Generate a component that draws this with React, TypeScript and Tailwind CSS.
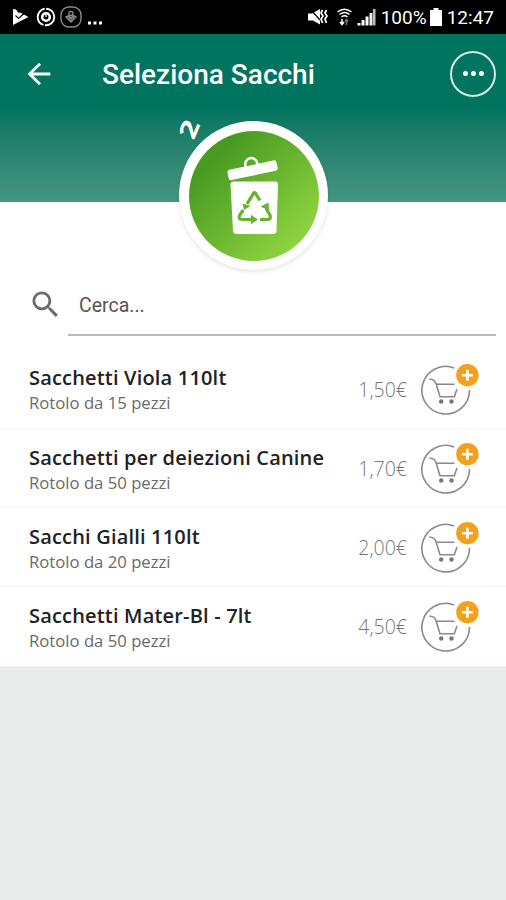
import { MdArrowBack, MdSearch } from 'react-icons/md'

interface Product {
  name: string
  details: string
  price: string
}

const products: Product[] = [
  { name: 'Sacchetti Viola 110lt', details: 'Rotolo da 15 pezzi', price: '1,50€' },
  { name: 'Sacchetti per deiezioni Canine', details: 'Rotolo da 50 pezzi', price: '1,70€' },
  { name: 'Sacchi Gialli 110lt', details: 'Rotolo da 20 pezzi', price: '2,00€' },
  { name: 'Sacchetti Mater-Bl - 7lt', details: 'Rotolo da 50 pezzi', price: '4,50€' }
]

function StatusBar() {
  return (
    <div className="flex h-[34px] items-center justify-between bg-black pl-3 pr-[12px] text-white">
      <div className="flex items-center">
        <svg className="h-[18px] w-[17px]" viewBox="0 0 17 18">
          <path d="M1 1 L4 1.5 L6.5 5 L8 4.5 L16.500 9 L1 17 Z" fill="white" />
          <path d="M3.500 7.500 L6.500 10.500 L12.500 5" fill="none" stroke="black" strokeWidth="1.2" />
        </svg>
        <svg className="ml-[7px] h-[20px] w-[20px]" viewBox="0 0 20 20" fill="none" stroke="white">
          <circle cx="10" cy="10" r="8.300" strokeWidth="1.900" strokeDasharray="14 1.5 22 1.5" />
          <circle cx="10" cy="10" r="3.800" strokeWidth="2.6" />
          <path d="M10 5 V10" stroke="white" strokeWidth="1.200" />
        </svg>
        <svg className="ml-[4px] h-[22px] w-[22px]" viewBox="0 0 22 22" fill="none" stroke="#8b8b8b">
          <rect x="1" y="1" width="20" height="20" rx="8" strokeWidth="1.4" />
          <circle cx="11" cy="7.5" r="2" strokeWidth="1.3" />
          <path d="M6 11 L11 16 L16 11 L13.5 9.5 L11 12 L8.5 9.5 Z" fill="#666" strokeWidth="1.3" />
        </svg>
        <svg className="ml-[5px] h-[20px] w-[16px]" viewBox="0 0 16 20" fill="white">
          <rect x="1" y="14.500" width="3" height="3" />
          <rect x="6.500" y="14.500" width="3" height="3" />
          <rect x="12" y="14.500" width="3" height="3" />
        </svg>
      </div>
      <div className="flex items-center">
        <svg className="h-[18px] w-[20px]" viewBox="0 0 20 18" fill="white">
          <path d="M0 5.500 H4 L12 1 V16.500 L5 12.500 H0 Z" />
          <path d="M2 1 L14 14" stroke="black" strokeWidth="1.2" />
          <path d="M14.500 2 L13 5 L15 8 L13 11 L14.500 15 M18.500 2 L17 5 L19 8 L17 11 L18.500 15" fill="none" stroke="white" strokeWidth="1.7" />
        </svg>
        <svg className="ml-[9px] h-[18px] w-[15px]" viewBox="0 0 15 18" fill="none" stroke="white" strokeWidth="1.5">
          <path d="M0.500 4 Q7.500 -1.500 14.500 4 M2.500 6.500 Q7.500 2.500 12.500 6.500 M4.500 9 Q7.500 6.500 10.500 9" />
          <path d="M5 11 V16 M3 14 L5 16.500 L7 14" />
          <path d="M9.500 17 V12 M8 13.500 L9.500 11.500 L11 13.500" stroke="#777" />
        </svg>
        <svg className="ml-[5px] h-[18px] w-[20px]" viewBox="0 0 20 18" fill="white">
          <rect x="0.500" y="15" width="3" height="2.500" />
          <rect x="4.500" y="12" width="3" height="5.500" />
          <rect x="8.500" y="8.500" width="3" height="9" />
          <rect x="12.500" y="5" width="3" height="12.500" fill="#eee" />
          <rect x="16" y="1" width="2.500" height="16.500" fill="#bbb" />
        </svg>
        <span className="ml-[4px] w-[45px] pt-[2px] text-[19px] leading-[32px]">100%</span>
        <svg className="ml-[4px] h-[18px] w-[12px]" viewBox="0 0 12 18" fill="white">
          <path d="M3.500 0 H8.500 V2 H12 V18 H0 V2 H3.500 Z" />
        </svg>
        <span className="ml-[5px] pt-[2px] text-[19px] leading-[32px]">12:47</span>
      </div>
    </div>
  )
}

function BinBadge() {
  return (
    <div className="absolute left-[179px] top-[87px] size-[149px] rounded-full bg-white p-[9.500px] shadow-[0_2px_4px_rgba(0,0,0,0.1)]">
      <div className="size-full rounded-full bg-linear-to-br from-[#479b22] from-20% to-[#92d642] to-88%">
        <svg className="size-full" viewBox="0 0 130 130">
          <g transform="rotate(-12 63.500 39)" fill="white">
            <rect x="38.500" y="34" width="50" height="10.500" rx="2.500" />
            <path d="M57.500 35 V33 A6 6 0 0 1 69.500 33 V35" fill="none" stroke="white" strokeWidth="2.500" />
          </g>
          <path d="M44.500 50.500 H86 Q89 50.500 89 53.500 L87.500 100 Q87.300 103 84 103 H47.500 Q44.300 103 44 100 L41.500 53.500 Q41.500 50.500 44.500 50.500 Z" fill="white" />
          <g fill="none" stroke="#66b32c" strokeWidth="3.200" strokeLinejoin="round">
            <path d="M58 73 L64.500 62.300 Q65.500 61 66.500 62.300 L71 69.500" />
            <path d="M77 77.500 L81 84 Q82.500 88.500 78.500 88.500 H71" />
            <path d="M63 88.500 H53 Q49 88.500 50.500 84.500 L54.300 79" />
          </g>
          <g fill="#66b32c">
            <path d="M53.500 72.500 L61.500 75 L55 79 Z" />
            <path d="M71.500 75.500 L79.500 71.500 L80 79.500 Z" />
            <path d="M62 83.800 L68.800 88.500 L62 93.200 Z" />
          </g>
        </svg>
      </div>
    </div>
  )
}

function Header() {
  return (
    <header className="relative h-[168px] bg-linear-to-b from-[#00745f] from-45% to-[#459681]">
      <div className="flex h-[79px] items-center pl-[22px] pr-[10px] text-white">
        <MdArrowBack size={34} />
        <h1 className="ml-[46px] flex-1 pt-[2px] text-[28px] font-medium leading-none">Seleziona Sacchi</h1>
        <button className="flex size-[46px] items-center justify-center gap-[3px] rounded-full border-2 border-white/85">
          <span className="size-[5px] rounded-full bg-white" />
          <span className="size-[5px] rounded-full bg-white" />
          <span className="size-[5px] rounded-full bg-white" />
        </button>
      </div>
      <span className="absolute left-[182px] top-[83px] [transform:rotate(-68deg)_scaleX(1.3)] font-['Open_Sans',sans-serif] text-[24px] font-bold leading-none text-white">
        2
      </span>
      <BinBadge />
    </header>
  )
}

function CartIcon() {
  return (
    <svg className="h-[52px] w-[60px]" viewBox="0 0 60 52" fill="none" stroke="#8a8a8a" strokeWidth="1.600">
      <path d="M34 4.900 A23.800 23.800 0 1 0 49.500 27" />
      <path d="M9.300 16 Q14.500 16.200 16 20.500 L20 33.700 H34.300 L37 26 M16.500 21.300 H34.500" />
      <circle cx="21.200" cy="38.500" r="2.200" fill="#777" stroke="none" />
      <circle cx="31.500" cy="38.500" r="2.200" fill="#777" stroke="none" />
      <circle cx="47.400" cy="12.200" r="11.200" fill="#f5a01a" stroke="none" />
      <path d="M47.400 6.700 V17.700 M41.900 12.200 H52.900" stroke="white" strokeWidth="2.600" />
    </svg>
  )
}

function ProductRow({ product }: { product: Product }) {
  return (
    <li className="flex h-[79.200px] items-center border-b border-[#f3f3f3] pl-[29px] pr-[26px]">
      <div className="flex-1 pt-[3px]">
        <h2 className="text-[20px] font-semibold leading-[26px] tracking-[0.180px] text-[#222]">{product.name}</h2>
        <p className="text-[16.700px] leading-[24px] text-[#6a6a6a]">{product.details}</p>
      </div>
      <span className="mr-[13px] pt-px text-[19.500px] font-light text-[#777]">{product.price}</span>
      <button>
        <CartIcon />
      </button>
    </li>
  )
}

export default function App() {
  return (
    <div className="min-h-[900px] w-[506px] overflow-hidden bg-[#e8ecea] font-[Roboto,sans-serif]">
      <StatusBar />
      <Header />
      <main className="bg-white">
        <div className="flex h-[147.800px] items-start pl-[28px] pr-[10px] pt-[84px]">
          <MdSearch size={35} className="mt-px text-[#6c6c6c]" />
          <input
            className="ml-[5px] h-[50px] min-w-0 flex-1 border-b-2 border-[#bbb] pb-[10px] pl-[11px] text-[19.500px] text-[#555] outline-none placeholder:text-[#555]"
            placeholder="Cerca..."
          />
        </div>
        <ul className="font-['Open_Sans',sans-serif]">
          {products.map((product) => (
            <ProductRow key={product.name} product={product} />
          ))}
        </ul>
      </main>
    </div>
  )
}
